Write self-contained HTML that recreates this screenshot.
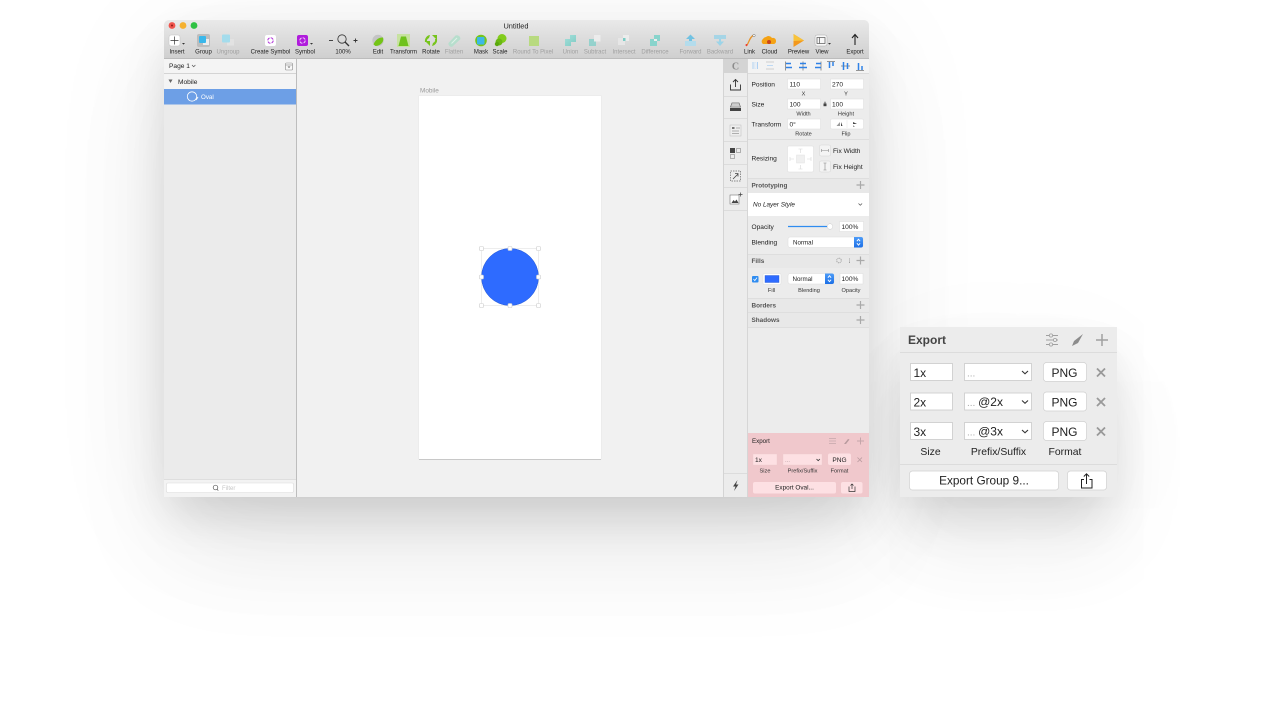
<!DOCTYPE html>
<html>
<head>
<meta charset="utf-8">
<title>Untitled</title>
<style>
html,body{margin:0;padding:0;width:1280px;height:720px;overflow:hidden;background:#fff}
#win{position:absolute;left:164px;top:20px;width:705px;height:477px;border-radius:5px 5px 2px 2px;box-shadow:0 22px 44px -6px rgba(0,0,0,.13),0 60px 110px rgba(0,0,0,.06),0 20px 130px rgba(0,0,0,.07)}
#pan{position:absolute;left:900px;top:327px;width:217px;height:170px;box-shadow:0 26px 44px -8px rgba(0,0,0,.13),0 50px 90px rgba(0,0,0,.06),0 30px 130px rgba(0,0,0,.04)}
svg{position:absolute;left:0;top:0;filter:blur(.28px)}
text{font-family:"Liberation Sans",sans-serif;font-size:6px;fill:#222}
.m{text-anchor:middle}
.d{fill:#a0a0a0}
.l{font-size:6.6px;fill:#222}
.b{font-weight:bold}
.s{font-size:5.6px;fill:#333}
.p{font-size:12px;fill:#222}
.ps{font-size:10.4px;fill:#222}
</style>
</head>
<body>
<div id="win"></div>
<div id="pan"></div>
<svg width="1280" height="720" viewBox="0 0 1280 720">
<defs>
<linearGradient id="tb" x1="0" y1="0" x2="0" y2="1"><stop offset="0" stop-color="#e9e9e9"/><stop offset="1" stop-color="#cfcfcf"/></linearGradient>
<linearGradient id="st" x1="0" y1="0" x2="0" y2="1"><stop offset="0" stop-color="#4d9cf8"/><stop offset="1" stop-color="#1c6fe6"/></linearGradient>
<linearGradient id="gr" x1="0" y1="0" x2="0" y2="1"><stop offset="0" stop-color="#a6dc5c"/><stop offset="1" stop-color="#66b814"/></linearGradient>
<linearGradient id="cy" x1="0" y1="0" x2="1" y2="1"><stop offset="0" stop-color="#90e0da"/><stop offset="1" stop-color="#62c6bc"/></linearGradient>
<g id="plus"><path d="M-4 0H4M0-4V4" stroke="#a9a9a9" stroke-width="1.2" fill="none"/></g>
<g id="ud"><path d="M-1.6-1L0-3L1.6-1M-1.6 1L0 3L1.6 1" stroke="#fff" stroke-width=".9" fill="none"/></g>
</defs>

<!-- window base -->
<path d="M164 25a5 5 0 0 1 5-5H864a5 5 0 0 1 5 5V497H164Z" fill="#f1f1f1"/>
<path d="M164 25a5 5 0 0 1 5-5H864a5 5 0 0 1 5 5V58H164Z" fill="url(#tb)"/>
<rect x="164" y="58" width="705" height="1" fill="#bcbcbc"/>
<circle cx="172" cy="25.500" r="3.400" fill="#f0554e"/><circle cx="172" cy="25.500" r="1" fill="#8e1c16"/>
<circle cx="183" cy="25.500" r="3.400" fill="#f5b130"/>
<circle cx="194" cy="25.500" r="3.400" fill="#2fc244"/>
<text x="516" y="28.500" class="m" style="font-size:7.4px">Untitled</text>

<!-- toolbar: insert -->
<rect x="169" y="35" width="11" height="11" rx="2" fill="#fff" stroke="#c0c0c0" stroke-width=".5"/>
<path d="M170.500 40.500H178.500M174.500 36.500V44.500" stroke="#333" stroke-width=".7"/>
<path d="M182 43h3l-1.500 1.600z" fill="#333"/>
<rect x="197" y="34" width="13" height="13" rx="2" fill="#bdbdbd"/>
<rect x="203" y="39" width="6" height="6" fill="#ececec"/>
<rect x="199" y="36" width="7" height="7" rx="1" fill="#3ab7ea"/>
<rect x="227" y="39" width="7" height="6.500" fill="#e2e2e2"/>
<rect x="222" y="34.500" width="8" height="8" rx="1" fill="#a4dcec"/>
<!-- symbols -->
<rect x="265" y="35" width="11" height="11" rx="2" fill="#fff"/>
<circle cx="270.500" cy="40.500" r="2.700" fill="none" stroke="#b23bd8" stroke-width="1" stroke-dasharray="3 1.200"/>
<rect x="297" y="35" width="11" height="11" rx="2" fill="#b01cdc"/>
<circle cx="302.500" cy="40.500" r="2.700" fill="none" stroke="#eec6f8" stroke-width="1" stroke-dasharray="3 1.200"/>
<path d="M310 43h3l-1.500 1.600z" fill="#333"/>
<!-- zoom -->
<path d="M329 40.500h4" stroke="#333" stroke-width=".9"/>
<circle cx="342" cy="39" r="4.200" fill="none" stroke="#333" stroke-width=".8"/>
<path d="M345 42L349 46" stroke="#333" stroke-width="1.300"/>
<path d="M353.500 40.500h4M355.500 38.500v4" stroke="#333" stroke-width=".9"/>
<!-- edit -->
<circle cx="378" cy="40.500" r="5.700" fill="#c4c4c4"/>
<path d="M373.500 44.500C375 40 379 37 383 37.500C384.500 42 380 46 375.500 46Z" fill="#74c416"/>
<!-- transform -->
<rect x="397" y="34" width="13" height="13" fill="#c7e2a0"/>
<path d="M398.500 46L401 36.500H406L408.500 46Z" fill="#6fc21c"/>
<!-- rotate -->
<path d="M425 42a6 6 0 0 1 5-7l-1 3a3.500 3.500 0 0 0-2 4z" fill="#77c41c"/>
<path d="M437 39a6 6 0 0 1-5 7l1-3a3.500 3.500 0 0 0 2-4z" fill="#77c41c"/>
<path d="M432 35h5v5z" fill="#77c41c"/><path d="M425 41h5v5z" fill="#77c41c"/>
<!-- flatten -->
<path d="M448.500 43L455.500 35.500Q458 34.500 460 37Q461 39 459.500 40L452.500 46.500Q450.500 47.500 449 45.500Q448 44 448.500 43Z" fill="#b7decd"/>
<path d="M451.500 43.500L457 38" stroke="#dff1e8" stroke-width="1"/>
<!-- mask -->
<circle cx="481" cy="40.500" r="5.800" fill="#76c41c"/>
<rect x="477" y="37" width="7.500" height="7.500" rx="1" fill="#3db8e8"/>
<!-- scale -->
<circle cx="502" cy="38.500" r="4.500" fill="#82cc1c"/>
<circle cx="499" cy="42" r="3.500" fill="#6ab814"/>
<circle cx="497" cy="44" r="2.200" fill="#5aa80c"/>
<!-- round -->
<rect x="529" y="36" width="10" height="10" fill="#b8da80"/>
<!-- booleans -->
<path d="M565 39h5v-4h6v7h-5v4h-6z" fill="url(#cy)" opacity=".75"/>
<rect x="589" y="39" width="7" height="7" fill="#88d0ca" opacity=".85"/><rect x="594" y="35" width="6.500" height="6.500" fill="#ececec"/>
<rect x="618" y="38" width="7" height="7" fill="#e6e6e6"/><rect x="623" y="35" width="6" height="6" fill="#ececec"/><rect x="623" y="38" width="2.500" height="3" fill="#7accc4"/>
<rect x="650" y="39" width="7" height="7" fill="#88d4cc"/><rect x="654" y="35" width="6" height="6" fill="#88d4cc"/><rect x="654" y="39" width="3" height="2" fill="#eee"/>
<!-- forward -->
<path d="M690.500 34.500L695 39H692V42H689V39H686Z" fill="#72c2e2"/>
<rect x="685" y="41" width="11" height="5" fill="#b4dcec"/>
<rect x="714" y="35" width="12" height="4" fill="#9cd4e8" opacity=".85"/>
<path d="M720 46L716 41.500H719V39H721V41.500H724Z" fill="#9cd4e8"/>
<!-- link -->
<path d="M746 46C749 44 749 37 754 35" stroke="#e8942c" stroke-width="1.300" fill="none"/>
<circle cx="754" cy="35.500" r="1.200" fill="#fff" stroke="#444" stroke-width=".4"/><circle cx="746.500" cy="45" r="1" fill="#e33"/>
<!-- cloud -->
<path d="M763 44a3 3 0 0 1 0-5 4 4 0 0 1 3-2 4 4 0 0 1 6 1 3 3 0 0 1 4 3 3 3 0 0 1-2 3Z" fill="#f4a214"/>
<circle cx="769" cy="42" r="2" fill="#c9441c"/>
<!-- preview -->
<path d="M793.500 34L804 40.500L793.500 47Z" fill="#f3981c"/><path d="M793.500 34L804 40.500L793.500 41Z" fill="#f8c33a"/>
<!-- view -->
<rect x="815" y="35" width="12" height="11" rx="2" fill="#f8f8f8" stroke="#aaa" stroke-width=".5"/>
<rect x="817" y="37.500" width="8" height="6" fill="none" stroke="#555" stroke-width=".7"/><path d="M819.500 37.500v6" stroke="#555" stroke-width=".7"/>
<path d="M828 43h3l-1.500 1.600z" fill="#333"/>
<!-- export -->
<path d="M855 45V35M852 38L855 34.500L858 38" fill="none" stroke="#222" stroke-width="1.100"/>

<text x="177" y="53.500" class="m">Insert</text>
<text x="203.500" y="53.500" class="m">Group</text>
<text x="228" y="53.500" class="m d">Ungroup</text>
<text x="270.500" y="53.500" class="m">Create Symbol</text>
<text x="305" y="53.500" class="m">Symbol</text>
<text x="343" y="53.500" class="m">100%</text>
<text x="378" y="53.500" class="m">Edit</text>
<text x="403.500" y="53.500" class="m">Transform</text>
<text x="431" y="53.500" class="m">Rotate</text>
<text x="454" y="53.500" class="m d">Flatten</text>
<text x="481" y="53.500" class="m">Mask</text>
<text x="500" y="53.500" class="m">Scale</text>
<text x="533" y="53.500" class="m d">Round To Pixel</text>
<text x="570.500" y="53.500" class="m d">Union</text>
<text x="595" y="53.500" class="m d">Subtract</text>
<text x="624" y="53.500" class="m d">Intersect</text>
<text x="655" y="53.500" class="m d">Difference</text>
<text x="690.500" y="53.500" class="m d">Forward</text>
<text x="720" y="53.500" class="m d">Backward</text>
<text x="749.500" y="53.500" class="m">Link</text>
<text x="769.500" y="53.500" class="m">Cloud</text>
<text x="798.500" y="53.500" class="m">Preview</text>
<text x="822" y="53.500" class="m">View</text>
<text x="855" y="53.500" class="m">Export</text>

<!-- left panel -->
<rect x="164" y="59" width="132" height="14" fill="#f4f4f4"/>
<rect x="164" y="73" width="132" height="406" fill="#ebebeb"/>
<rect x="164" y="73" width="132" height="1" fill="#d4d4d4"/>
<rect x="296" y="59" width="1" height="438" fill="#bdbdbd"/>
<text x="169" y="68.200" style="font-size:6.6px">Page 1</text>
<path d="M192 65l1.700 1.700l1.700-1.700" fill="none" stroke="#555" stroke-width=".7"/>
<rect x="285.500" y="63" width="7" height="7" rx="1" fill="#f8f8f8" stroke="#888" stroke-width=".6"/>
<path d="M285.500 65h7" stroke="#888" stroke-width=".6"/><path d="M287.500 66.500h3l-1.500 1.500z" fill="#666"/>
<rect x="164" y="74" width="132" height="15" fill="#f4f4f4"/>
<path d="M168.500 79.500h4l-2 3.500z" fill="#666"/>
<text x="178" y="84" style="font-size:6.6px">Mobile</text>
<rect x="164" y="89" width="132" height="15.500" fill="#6d9fe6"/>
<circle cx="192" cy="96.500" r="4.700" fill="none" stroke="#fff" stroke-width=".8"/>
<path d="M196 100l2-3" stroke="#fff" stroke-width=".9"/>
<text x="201" y="99" style="font-size:6.2px;fill:#fff">Oval</text>
<rect x="164" y="479" width="132" height="18" fill="#f3f3f3"/>
<rect x="164" y="479" width="132" height="1" fill="#dedede"/>
<rect x="166.500" y="483" width="127" height="9.500" rx="1.500" fill="#fff" stroke="#dcdcdc" stroke-width=".6"/>
<circle cx="215.500" cy="487.500" r="2.300" fill="none" stroke="#555" stroke-width=".7"/><path d="M217 489.300l1.300 1.300" stroke="#555" stroke-width=".7"/>
<text x="222" y="490.200" style="font-size:6px;fill:#c6c6c6">Filter</text>

<!-- canvas -->
<text x="420" y="92.500" style="font-size:6.4px;fill:#9a9a9a">Mobile</text>
<rect x="418.500" y="95.500" width="183" height="364" fill="#e6e6e6"/>
<rect x="419" y="459" width="182" height="1" fill="#c8c8c8"/>
<rect x="419" y="96" width="182" height="363" fill="#fff"/>
<rect x="481.500" y="248.500" width="57" height="57" fill="none" stroke="#e6e6e6" stroke-width=".7"/>
<circle cx="510" cy="277" r="28.500" fill="#2e6bff" stroke="#2457d0" stroke-width=".5"/>
<g fill="#fff" stroke="#cccccc" stroke-width=".6">
<rect x="479.500" y="246.500" width="4" height="4" rx="1"/><rect x="508" y="246.500" width="4" height="4" rx="1"/><rect x="536.500" y="246.500" width="4" height="4" rx="1"/>
<rect x="479.500" y="275" width="4" height="4" rx="1"/><rect x="536.500" y="275" width="4" height="4" rx="1"/>
<rect x="479.500" y="303.500" width="4" height="4" rx="1"/><rect x="508" y="303.500" width="4" height="4" rx="1"/><rect x="536.500" y="303.500" width="4" height="4" rx="1"/>
</g>

<!-- tool strip -->
<rect x="723" y="59" width="24" height="438" fill="#ececec"/>
<rect x="723" y="59" width="1" height="438" fill="#d4d4d4"/>
<rect x="747" y="59" width="1" height="438" fill="#d6d6d6"/>
<rect x="724" y="59" width="23" height="14" fill="#d4d4d4"/>
<text x="735.500" y="69.500" class="m b" style="font-size:10px;fill:#8c8c8c;font-family:'Liberation Serif',serif">C</text>
<g fill="#dcdcdc">
<rect x="724" y="96" width="23" height="1"/><rect x="724" y="118" width="23" height="1"/><rect x="724" y="141" width="23" height="1"/><rect x="724" y="164" width="23" height="1"/><rect x="724" y="187" width="23" height="1"/><rect x="724" y="210" width="23" height="1"/><rect x="724" y="473" width="23" height="1"/>
</g>
<path d="M730.500 84.500v5.500h10v-5.500M735.500 87V80M733 82l2.500-2.500L738 82" fill="none" stroke="#333" stroke-width=".9"/>
<path d="M732 103h7l1.500 4h-10z" fill="none" stroke="#666" stroke-width=".7"/><rect x="730" y="108" width="11" height="3" fill="#444"/><path d="M731 105h9" stroke="#888" stroke-width=".6"/>
<rect x="730" y="125" width="11" height="11" fill="#eee" stroke="#bbb" stroke-width=".5"/><rect x="732" y="127" width="2.500" height="2" fill="#777"/><path d="M736 128h4M732 131h7M732 133.500h7" stroke="#999" stroke-width=".7"/>
<rect x="730" y="148" width="5" height="5" fill="#444"/><rect x="736.500" y="148.500" width="4" height="4" fill="none" stroke="#888" stroke-width=".6"/><rect x="730.500" y="154.500" width="4" height="4" fill="none" stroke="#888" stroke-width=".6"/>
<rect x="730.500" y="171" width="10" height="10" fill="none" stroke="#666" stroke-width=".7" stroke-dasharray="1.500 1"/><path d="M733 179l5-5M738 176.500v-3h-3" fill="none" stroke="#444" stroke-width=".8"/>
<rect x="730" y="195" width="9" height="9" fill="#fff" stroke="#777" stroke-width=".6"/><path d="M731.500 203l2-3l1.500 1.500l1.500-2l2 3.500z" fill="#444"/><path d="M738.500 194.500h4M740.500 192.500v4" stroke="#444" stroke-width=".7"/>
<path d="M737.500 480L733 486.500h2.500L734 491l4.500-6.500H736Z" fill="#444"/>

<!-- inspector -->
<rect x="748" y="59" width="121" height="438" fill="#ececec"/>
<rect x="748" y="59" width="121" height="14" fill="#f3f3f3"/>
<rect x="748" y="73" width="121" height="1" fill="#dcdcdc"/>
<g fill="none" stroke-width=".9">
<path d="M753 62v7M757.500 62v7" stroke="#a8cdf2"/><rect x="754.500" y="62.500" width="1.500" height="6" stroke="#cce2f7" stroke-width=".5"/>
<path d="M766 62h8M766 69h8" stroke="#cfcfcf"/><path d="M767 65.500h6" stroke="#b8d6f4"/>
<path d="M785.500 61.500v9" stroke="#555" stroke-width=".6"/><path d="M786 63.500h5M786 67.500h6" stroke="#2f82e6" stroke-width="1.500"/>
<path d="M803 61.500v9" stroke="#555" stroke-width=".6"/><path d="M800 63.500h6M799 67.500h8" stroke="#2f82e6" stroke-width="1.500"/>
<path d="M821 61.500v9" stroke="#555" stroke-width=".6"/><path d="M816 63.500h5M815 67.500h6" stroke="#2f82e6" stroke-width="1.500"/>
<path d="M827 61.500h8" stroke="#555" stroke-width=".6"/><path d="M829.500 62v6M833 62v4" stroke="#2f82e6" stroke-width="1.500"/>
<path d="M841 66h9" stroke="#555" stroke-width=".6"/><path d="M843.500 62v8M847.500 63v6" stroke="#2f82e6" stroke-width="1.500"/>
<path d="M856 70.500h8" stroke="#555" stroke-width=".6"/><path d="M858.500 63v7M862 66v4" stroke="#2f82e6" stroke-width="1.500"/>
</g>

<g fill="#fff" stroke="#dcdcdc" stroke-width=".5">
<rect x="787.500" y="79" width="33" height="10"/><rect x="830.500" y="79" width="33" height="10"/>
<rect x="787.500" y="99" width="33" height="10"/><rect x="830.500" y="99" width="33" height="10"/>
<rect x="787.500" y="119" width="33" height="10"/><rect x="830.500" y="119" width="33" height="10" rx="1.500"/>
</g>
<text x="751.500" y="86.500" class="l">Position</text>
<text x="789.500" y="86.300" class="l">110</text>
<text x="832" y="86.300" class="l">270</text>
<text x="803.500" y="95.300" class="m s">X</text>
<text x="846" y="95.300" class="m s">Y</text>
<text x="751.500" y="106.300" class="l">Size</text>
<text x="789.500" y="106.300" class="l">100</text>
<text x="832" y="106.300" class="l">100</text>
<rect x="823.500" y="103.500" width="3" height="2.700" fill="#444"/><path d="M824.200 103.500v-.8a.8.8 0 0 1 1.600 0v.8" fill="none" stroke="#444" stroke-width=".5"/>
<text x="803.500" y="115.300" class="m s">Width</text>
<text x="846" y="115.300" class="m s">Height</text>
<text x="751.500" y="126.300" class="l">Transform</text>
<text x="789.500" y="126.300" class="l">0°</text>
<text x="803.500" y="135.300" class="m s">Rotate</text>
<text x="846" y="135.300" class="m s">Flip</text>
<path d="M847 120v8" stroke="#e4e4e4" stroke-width=".5"/>
<path d="M840 122v4h-3.500z" fill="#999"/><path d="M841 122v4h1.500z" fill="#444"/>
<path d="M853 122v2h4z" fill="#444"/><path d="M853 125v2h2z" fill="#999"/>
<rect x="748" y="139" width="121" height="1" fill="#dedede"/>
<text x="751.500" y="160.500" class="l">Resizing</text>
<rect x="787.500" y="146" width="26" height="26" rx="1.500" fill="#fff" stroke="#dcdcdc" stroke-width=".5"/>
<rect x="796.500" y="155" width="8" height="8" fill="#f0f0f0" stroke="#e2e2e2" stroke-width=".5"/>
<path d="M800.500 149v4M798.500 149h4M800.500 165v4M798.500 169h4M790 159h4M790 157v4M807 159h4M811 157v4" stroke="#d8d8d8" stroke-width=".6" fill="none"/>
<rect x="819.500" y="145" width="11" height="11" rx="1.500" fill="#f4f4f4" stroke="#d4d4d4" stroke-width=".5"/>
<path d="M821.500 150.500h7M821.500 149v3M828.500 149v3" stroke="#888" stroke-width=".6" fill="none"/>
<text x="833" y="153" class="l">Fix Width</text>
<rect x="819.500" y="161" width="11" height="11" rx="1.500" fill="#f4f4f4" stroke="#d4d4d4" stroke-width=".5"/>
<path d="M825 163v7M823.500 163h3M823.500 170h3" stroke="#888" stroke-width=".6" fill="none"/>
<text x="833" y="169" class="l">Fix Height</text>
<rect x="748" y="178" width="121" height="15" fill="#e8e8e8"/>
<rect x="748" y="178" width="121" height="1" fill="#dedede"/>
<text x="751.500" y="187.500" class="l b" style="fill:#555;font-size:6.4px">Prototyping</text>
<use href="#plus" x="860.500" y="185"/>
<rect x="748" y="193" width="121" height="23" fill="#fff"/>
<text x="753" y="206.500" style="font-size:6.4px;font-style:italic">No Layer Style</text>
<path d="M858.500 203.500l1.800 1.800l1.800-1.800" fill="none" stroke="#555" stroke-width=".7"/>
<text x="751.500" y="229" class="l">Opacity</text>
<path d="M788 226.500h42" stroke="#2f8cf0" stroke-width="1.200"/>
<circle cx="830" cy="226.500" r="2.800" fill="#fff" stroke="#ccc" stroke-width=".5"/>
<rect x="839.500" y="221.500" width="24" height="10" fill="#fff" stroke="#dcdcdc" stroke-width=".5"/>
<text x="841.500" y="229" class="l">100%</text>
<text x="751.500" y="244.500" class="l">Blending</text>
<rect x="788" y="237" width="75" height="10.500" rx="2" fill="#fff" stroke="#dcdcdc" stroke-width=".5"/>
<text x="793" y="244.500" style="font-size:6.2px">Normal</text>
<path d="M854 237h7a2 2 0 0 1 2 2v6.500a2 2 0 0 1-2 2h-7z" fill="url(#st)"/>
<use href="#ud" x="858.500" y="242.200"/>
<rect x="748" y="254" width="121" height="14" fill="#e8e8e8"/>
<rect x="748" y="254" width="121" height="1" fill="#dedede"/>
<text x="751.500" y="263" class="l b" style="fill:#555;font-size:6.4px">Fills</text>
<circle cx="839" cy="260.500" r="2.300" fill="none" stroke="#aaa" stroke-width="1.100" stroke-dasharray="1.100 .7"/>
<path d="M849.500 258.500v1M849.500 260.500v1M849.500 262v1" stroke="#999" stroke-width=".9"/>
<use href="#plus" x="860.500" y="260.500"/>
<rect x="752" y="276" width="6.500" height="6.500" rx="1" fill="#2f8cf0"/>
<path d="M753.500 279l1.300 1.600l2.200-3" fill="none" stroke="#fff" stroke-width=".8"/>
<rect x="763" y="273.500" width="18" height="11" rx="1.500" fill="#fff" stroke="#dcdcdc" stroke-width=".5"/>
<rect x="765" y="275.500" width="14" height="7" fill="#2e6bff" stroke="#2457d0" stroke-width=".4"/>
<rect x="788" y="273.500" width="46" height="10.500" rx="2" fill="#fff" stroke="#dcdcdc" stroke-width=".5"/>
<text x="792.500" y="281" style="font-size:6.2px">Normal</text>
<path d="M825 273.500h7a2 2 0 0 1 2 2v6.500a2 2 0 0 1-2 2h-7z" fill="url(#st)"/>
<use href="#ud" x="829.500" y="278.700"/>
<rect x="840" y="273.500" width="23" height="10.500" fill="#fff" stroke="#dcdcdc" stroke-width=".5"/>
<text x="841.500" y="281" class="l">100%</text>
<text x="771.500" y="292" class="m s">Fill</text>
<text x="809" y="292" class="m s">Blending</text>
<text x="851" y="292" class="m s">Opacity</text>
<rect x="748" y="298" width="121" height="29" fill="#e8e8e8"/>
<rect x="748" y="298" width="121" height="1" fill="#dedede"/>
<rect x="748" y="312" width="121" height="1" fill="#dedede"/>
<rect x="748" y="327" width="121" height="1" fill="#dedede"/>
<text x="751.500" y="307.500" class="l b" style="fill:#555;font-size:6.4px">Borders</text>
<use href="#plus" x="860.500" y="305"/>
<text x="751.500" y="322" class="l b" style="fill:#555;font-size:6.4px">Shadows</text>
<use href="#plus" x="860.500" y="320"/>

<!-- export pink -->
<rect x="748" y="433" width="121" height="64" fill="#f0c8cc"/>
<text x="752" y="443" class="l" style="font-size:6.2px">Export</text>
<path d="M829 438.500h7M829 441h7M829 443.500h7" stroke="#c4a6aa" stroke-width=".8"/>
<path d="M844 444l4-5l1.500.5l-3.500 4.500z" fill="#b89a9e"/>
<path d="M857 441h7M860.500 437.500v7" stroke="#c4a6aa" stroke-width="1"/>
<rect x="753" y="454" width="24" height="11" fill="#fde0e3" stroke="#eccace" stroke-width=".4"/>
<text x="755" y="462" class="l">1x</text>
<rect x="783" y="454" width="39" height="11" fill="#fde0e3" stroke="#eccace" stroke-width=".4"/>
<text x="785" y="462" style="font-size:6px;fill:#b49ca0">...</text>
<path d="M816.500 459l1.700 1.700l1.700-1.700" fill="none" stroke="#333" stroke-width=".8"/>
<rect x="828" y="453.500" width="23" height="11.500" rx="2" fill="#fde0e3"/>
<text x="839.500" y="462" class="m l">PNG</text>
<path d="M857.500 457.500l4.500 4.500M862 457.500l-4.500 4.500" stroke="#b89a9e" stroke-width=".8"/>
<text x="765" y="472.500" class="m s">Size</text>
<text x="802.500" y="472.500" class="m s">Prefix/Suffix</text>
<text x="839.500" y="472.500" class="m s">Format</text>
<rect x="753" y="482" width="83" height="11.500" rx="2" fill="#fde0e3"/>
<text x="794.500" y="489.700" class="m l" style="font-size:6.400px">Export Oval...</text>
<rect x="841" y="482" width="21.500" height="11.500" rx="2" fill="#fde0e3"/>
<path d="M849 486.500v5h6v-5M852 489v-5M850.500 485.500l1.500-1.500l1.500 1.500" fill="none" stroke="#333" stroke-width=".7"/>

<!-- floating export panel -->
<rect x="900" y="327" width="217" height="170" fill="#ececec"/>
<rect x="900" y="352" width="217" height="1" fill="#dcdcdc"/>
<rect x="900" y="464" width="217" height="1" fill="#dcdcdc"/>
<text x="908" y="344" style="font-size:12px;font-weight:bold;fill:#444">Export</text>
<path d="M1046 335.500h12M1046 340h12M1046 344.500h12" stroke="#a0a0a0" stroke-width="1"/>
<circle cx="1051" cy="335.500" r="1.600" fill="#ececec" stroke="#a0a0a0" stroke-width=".8"/><circle cx="1055" cy="340" r="1.600" fill="#ececec" stroke="#a0a0a0" stroke-width=".8"/><circle cx="1051" cy="344.500" r="1.600" fill="#ececec" stroke="#a0a0a0" stroke-width=".8"/>
<path d="M1072 346L1074 341L1083 334L1078 343Z" fill="#8c8c8c"/>
<path d="M1096 340h12M1102 334v12" stroke="#a0a0a0" stroke-width="1.500"/>

<g fill="#fff" stroke="#cfcfcf" stroke-width=".9">
<rect x="910.500" y="363.500" width="42" height="17"/><rect x="910.500" y="393" width="42" height="17"/><rect x="910.500" y="422.500" width="42" height="17"/>
<rect x="964.500" y="363.500" width="67" height="17"/><rect x="964.500" y="393" width="67" height="17"/><rect x="964.500" y="422.500" width="67" height="17"/>
</g>
<g fill="#fff" stroke="#d0d0d0" stroke-width=".7">
<rect x="1043.500" y="362.500" width="43" height="19" rx="3"/><rect x="1043.500" y="392" width="43" height="19" rx="3"/><rect x="1043.500" y="421.500" width="43" height="19" rx="3"/>
<rect x="909.500" y="471" width="149" height="19" rx="3"/><rect x="1067.500" y="471" width="39" height="19" rx="3"/>
</g>
<text x="913.500" y="377" class="p">1x</text>
<text x="913.500" y="406.500" class="p">2x</text>
<text x="913.500" y="436" class="p">3x</text>
<text x="967" y="376.500" class="p" style="fill:#aaa;font-size:10px">...</text>
<text x="967" y="406" style="font-size:12px"><tspan style="fill:#aaa;font-size:10px">... </tspan>@2x</text>
<text x="967" y="435.500" style="font-size:12px"><tspan style="fill:#aaa;font-size:10px">... </tspan>@3x</text>
<path d="M1022 371l3 2.800l3-2.800M1022 400.500l3 2.800l3-2.800M1022 430l3 2.800l3-2.800" fill="none" stroke="#333" stroke-width="1.100"/>
<text x="1064.500" y="377" class="m p">PNG</text>
<text x="1064.500" y="406.500" class="m p">PNG</text>
<text x="1064.500" y="436" class="m p">PNG</text>
<path d="M1097 368.500l8 8M1105 368.500l-8 8M1097 398l8 8M1105 398l-8 8M1097 427.500l8 8M1105 427.500l-8 8" stroke="#999" stroke-width="1.800"/>
<text x="930.500" y="455" class="m ps">Size</text>
<text x="998.500" y="455" class="m ps">Prefix/Suffix</text>
<text x="1065" y="455" class="m ps">Format</text>
<text x="984" y="484.500" class="m p" style="font-size:11.800px">Export Group 9...</text>
<path d="M1084 479.500h-2.500v8.500h10.500v-8.500H1089.500M1086.500 484v-10M1083.800 476.500l2.700-2.700l2.700 2.700" fill="none" stroke="#222" stroke-width="1"/>
</svg>
</body>
</html>
